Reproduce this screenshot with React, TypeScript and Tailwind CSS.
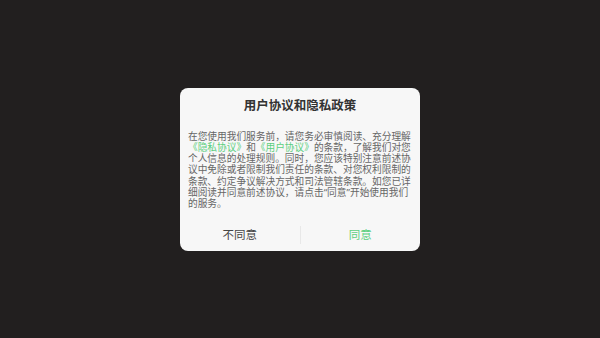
export default function App() {
    const font = { fontFamily: '"Noto Sans CJK SC", "Noto Sans", sans-serif' };
    const latin = { fontFamily: '"Noto Sans", sans-serif' };

    return (
        <div className="w-[600px] h-[338px] bg-[#221f1f] flex items-center justify-center" style={font}>
            <div className="w-[240px] h-[163px] bg-[#f7f7f7] rounded-[8px] flex flex-col">
                {/* Title */}
                <div className="pt-[10px] text-center text-[12.5px] leading-[14px] font-bold text-[#333333]">
                    用户协议和隐私政策
                </div>

                {/* Body */}
                <p className="mt-[19px] px-[8px] text-[9.7px] leading-[11.25px] text-[#666666] break-all">
                    在您使用我们服务前，请您务必审慎阅读、充分理解
                    <span className="text-[#5ccf7f]">《隐私协议》</span>和
                    <span className="text-[#5ccf7f]">《用户协议》</span>的条款，了解我们对您个人信息的处理规则。同时，您应该特别注意前述协议中免除或者限制我们责任的条款、对您权利限制的条款、约定争议解决方式和司法管辖条款。如您已详细阅读并同意前述协议，请点击<span style={latin}>“</span>同意<span style={latin}>”</span>开始使用我们的服务。
                </p>

                {/* Buttons */}
                <div className="mt-auto h-[32px] flex items-center">
                    <button className="flex-1 h-full text-[11.5px] text-[#444444]">不同意</button>
                    <div className="w-px h-[18px] bg-[#e8e8e8]" />
                    <button className="flex-1 h-full text-[11.5px] text-[#5ccf7f]">同意</button>
                </div>
            </div>
        </div>
    );
}
